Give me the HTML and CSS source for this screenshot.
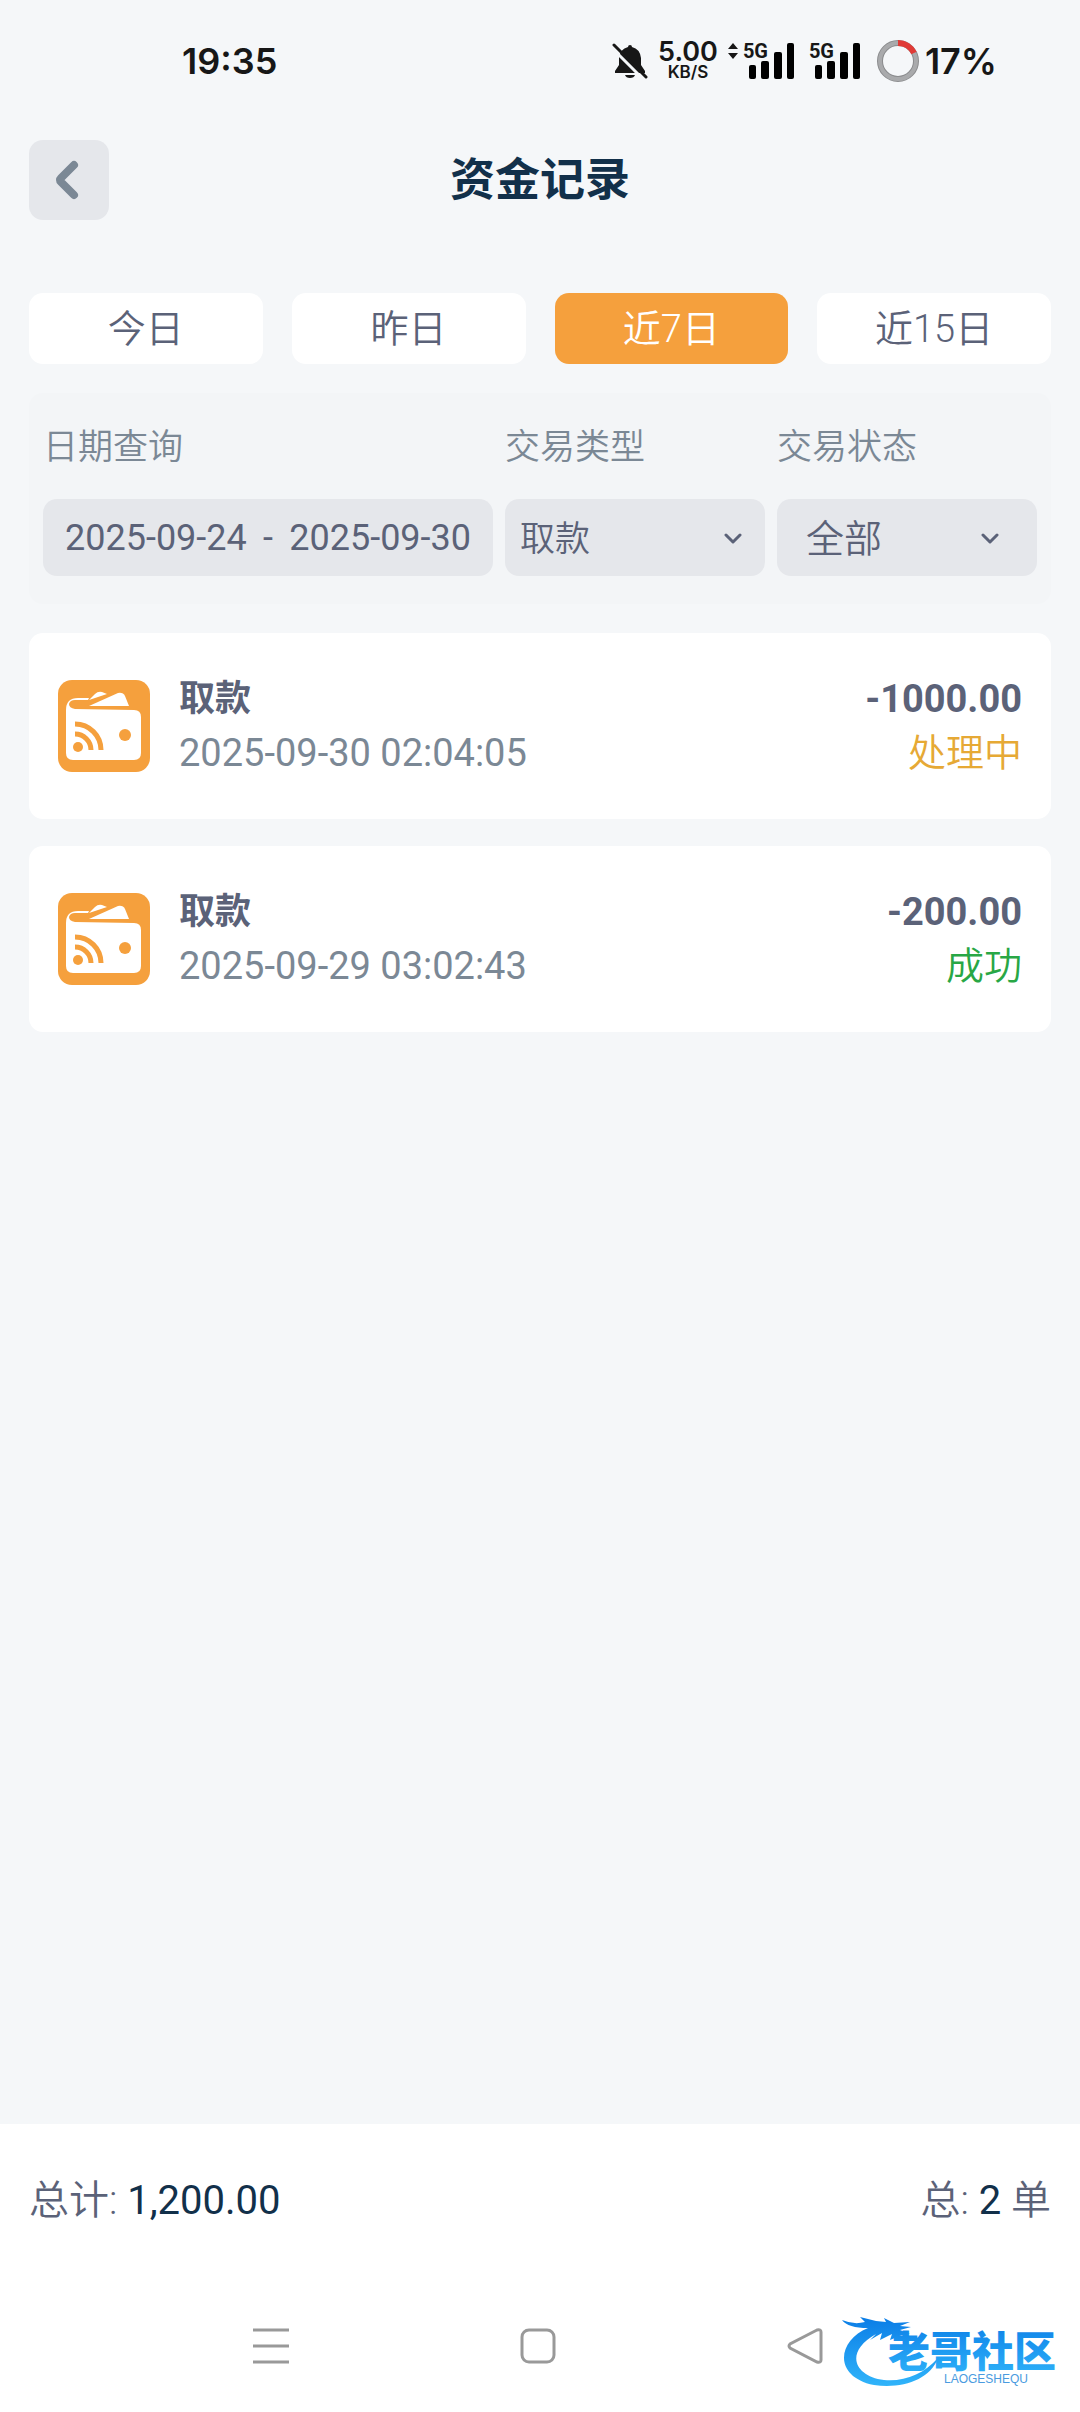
FILE: index.html
```html
<!DOCTYPE html>
<html lang="zh-CN">
<head>
<meta charset="utf-8">
<meta name="viewport" content="width=device-width, initial-scale=1">
<title>资金记录</title>
<link rel="stylesheet" href="styles.css">
</head>
<body>
<svg class="defs" aria-hidden="true">
  <symbol id="wallet" viewBox="0 0 92 92">
    <rect width="92" height="92" rx="14" fill="#f5a03d"/>
    <path d="M31 18 L20 18 Q8 18 8 30 L8 73 Q8 80 15 80 L76 80 Q83 80 83 73 L83 37 Q83 30 76 30 L17 29 Q11 28 11 24 Q12 20 17 20 L30 20 Z" fill="#fff"/>
    <path d="M31 20 L37 14 Q40 11 44 12 L49 14 Z" fill="#fff"/>
    <path d="M31 26 L60 13 Q65 12 67 16 L71 26 Z" fill="#fff"/>
    <circle cx="20" cy="67" r="5" fill="#f5a03d"/>
    <path d="M17 54 A16 16 0 0 1 33 70 M17 44 A26 26 0 0 1 43 70" fill="none" stroke="#f5a03d" stroke-width="5"/>
    <circle cx="67" cy="55" r="6" fill="#f5a03d"/>
  </symbol>
  <symbol id="chevron" viewBox="0 0 18 12">
    <path d="M2 2 L9 9 L16 2" fill="none" stroke="#5b6278" stroke-width="3" stroke-linecap="round" stroke-linejoin="round"/>
  </symbol>
  <symbol id="bars" viewBox="0 0 46 36">
    <rect x="0" y="22" width="7" height="14" rx="2"/>
    <rect x="12" y="18" width="8" height="18" rx="2"/>
    <rect x="25" y="9" width="8" height="27" rx="2"/>
    <rect x="38" y="0" width="7" height="36" rx="2"/>
  </symbol>
</svg>

<div class="status">
  <span class="clock">19:35</span>
  <div class="status-icons">
    <svg class="bell" viewBox="0 0 36 36">
      <path d="M18 2 Q20 2 20 4 Q28 6 29 15 L29 22 L33 28 L33 30 L3 30 L3 28 L7 22 L7 15 Q8 6 16 4 Q16 2 18 2 Z M13 32 H23 Q22 35 18 35 Q14 35 13 32 Z" fill="#171717"/>
      <path d="M0 5 L31 36" stroke="#f5f7f9" stroke-width="3"/>
      <path d="M2 2 L34 34" stroke="#171717" stroke-width="3" stroke-linecap="round"/>
    </svg>
    <div class="speed"><span class="speed-value">5.00</span><span class="speed-unit">KB/S</span></div>
    <div class="signal signal-active">
      <svg class="arrows" viewBox="0 0 10 16"><path d="M5 0 L10 6 H0 Z M5 16 L10 10 H0 Z" fill="#171717"/></svg>
      <span class="network">5G</span>
      <svg class="bars"><use href="#bars"/></svg>
    </div>
    <div class="signal">
      <span class="network">5G</span>
      <svg class="bars"><use href="#bars"/></svg>
    </div>
    <svg class="ring" viewBox="0 0 42 42" fill="none">
      <circle cx="21" cy="21" r="18" stroke="#8b8c8e" stroke-width="6"/>
      <circle cx="21" cy="21" r="18" stroke="#a9aaac" stroke-width="4"/>
      <path d="M21 3 A18 18 0 0 1 37 13" stroke="#e03a36" stroke-width="6"/>
    </svg>
    <span class="battery">17%</span>
  </div>
</div>

<header class="header">
  <button class="back" type="button" aria-label="返回">
    <svg viewBox="0 0 24 40"><path d="M19 5 L6 18 Q4 20 6 22 L19 35" fill="none" stroke="#7b8895" stroke-width="8" stroke-linecap="round" stroke-linejoin="round"/></svg>
  </button>
  <h1 class="title">资金记录</h1>
</header>

<main class="main">
  <div class="tabs">
    <button class="tab" type="button">今日</button>
    <button class="tab" type="button">昨日</button>
    <button class="tab tab-on" type="button">近7日</button>
    <button class="tab" type="button">近15日</button>
  </div>

  <form class="filters">
    <div class="field">
      <label class="label" for="from">日期查询</label>
      <div class="box range">
        <input class="date" id="from" type="text" value="2025-09-24">
        <span>-</span>
        <input class="date date-end" type="text" value="2025-09-30" aria-label="结束日期">
      </div>
    </div>
    <div class="field">
      <label class="label" for="type">交易类型</label>
      <div class="box pick">
        <select class="select" id="type"><option>取款</option></select>
        <svg class="chevron"><use href="#chevron"/></svg>
      </div>
    </div>
    <div class="field">
      <label class="label" for="state">交易状态</label>
      <div class="box pick pick-wide">
        <select class="select" id="state"><option>全部</option></select>
        <svg class="chevron"><use href="#chevron"/></svg>
      </div>
    </div>
  </form>

  <ul class="records">
    <li class="record">
      <svg class="wallet"><use href="#wallet"/></svg>
      <div class="info">
        <div class="kind">取款</div>
        <div class="time">2025-09-30 02:04:05</div>
      </div>
      <div class="result">
        <div class="amount">-1000.00</div>
        <div class="state pending">处理中</div>
      </div>
    </li>
    <li class="record">
      <svg class="wallet"><use href="#wallet"/></svg>
      <div class="info">
        <div class="kind">取款</div>
        <div class="time">2025-09-29 03:02:43</div>
      </div>
      <div class="result">
        <div class="amount">-200.00</div>
        <div class="state success">成功</div>
      </div>
    </li>
  </ul>
</main>

<footer class="footer">
  <div class="summary">
    <p class="sum">总计: <span class="figure">1,200.00</span></p>
    <p class="sum">总: <span class="figure">2</span> 单</p>
  </div>
  <nav class="nav">
    <button class="key" type="button" aria-label="最近任务"><svg viewBox="0 0 36 36"><path d="M0 2 H36 M0 18 H36 M0 34 H36"/></svg></button>
    <button class="key" type="button" aria-label="主页"><svg viewBox="0 0 36 36"><rect x="2" y="2" width="32" height="32" rx="7"/></svg></button>
    <button class="key" type="button" aria-label="后退"><svg viewBox="0 0 36 36"><path d="M30 2 L3 16 Q1 18 3 20 L30 34 Q34 35 34 32 V4 Q34 1 30 2 Z"/></svg></button>
  </nav>
  <svg class="watermark" viewBox="0 0 224 76">
    <defs>
      <linearGradient id="blue" x1="0" y1="0" x2="0" y2="1">
        <stop offset="0" stop-color="#0b7de6"/>
        <stop offset="1" stop-color="#30b4fa"/>
      </linearGradient>
    </defs>
    <path d="M28 14 C-2 26 -8 62 34 71 C62 75 90 66 98 44 C84 60 64 68 44 66 C14 62 4 38 36 20 L30 26 L42 19 L40 26 L52 20 L50 26 L62 21 L68 24 L66 20 L70 20 L60 16 L71 13 L60 12 L70 8 L54 9 L44 4 L46 8 L36 7 L20 3 L25 8 Q14 11 2 6 Q8 14 28 14 Z" fill="url(#blue)"/>
    <text class="mark-name" x="48" y="53" fill="url(#blue)">老哥社区</text>
    <text class="mark-sub" x="104" y="69">LAOGESHEQU</text>
  </svg>
</footer>
</body>
</html>
```
FILE: styles.css
```css
* {
  box-sizing: border-box;
}

body {
  margin: 0;
  min-height: 100vh;
  display: flex;
  flex-direction: column;
  background: #f5f7f9;
  color: #5b6278;
  font-family: Roboto, "Noto Sans CJK SC", sans-serif;
  font-size: 38px;
}

button,
input,
select {
  margin: 0;
  padding: 0;
  border: 0;
  background: none;
  color: inherit;
  font: inherit;
}

.defs {
  position: absolute;
  width: 0;
  height: 0;
}

/* Status bar */
.status {
  display: flex;
  align-items: center;
  justify-content: space-between;
  height: 122px;
  padding: 0 83px 0 182px;
  color: #171717;
  font-family: Inter, sans-serif;
  font-weight: 600;
}

.clock,
.battery {
  font-size: 36px;
}

.status-icons {
  display: flex;
  align-items: center;
}

.bell {
  width: 36px;
  height: 36px;
  margin-right: 10px;
}

.speed {
  display: flex;
  flex-direction: column;
  align-items: center;
  margin-right: 10px;
}

.speed-value {
  font-size: 27px;
  line-height: 22px;
}

.speed-unit {
  font-size: 17px;
  line-height: 18px;
}

.signal {
  display: grid;
  grid-template-columns: 6px 46px;
  margin-right: 14px;
}

.signal-active {
  grid-template-columns: 15px 6px 46px;
}

.arrows {
  width: 10px;
  height: 16px;
}

.network {
  width: 26px;
  font: 700 20px/16px Roboto, sans-serif;
}

.bars {
  width: 46px;
  height: 36px;
}

.ring {
  width: 42px;
  height: 42px;
  margin-left: 2px;
  margin-right: 6px;
}

/* Header */
.header {
  display: grid;
  grid-template-columns: 80px 1fr 80px;
  align-items: center;
  padding: 18px 29px 0;
}

.back {
  display: flex;
  align-items: center;
  justify-content: center;
  height: 80px;
  padding-right: 4px;
  border-radius: 14px;
  background: #e5e7eb;
}

.back svg {
  width: 24px;
  height: 40px;
}

.title {
  margin: 0;
  padding-top: 2px;
  color: #12304a;
  font-size: 45px;
  font-weight: 700;
  line-height: 78px;
  text-align: center;
}

/* Content */
.main {
  flex: 1;
  padding: 73px 29px 29px;
}

.tabs {
  display: grid;
  grid-template-columns: repeat(4, 1fr);
  gap: 29px;
}

.tab {
  height: 71px;
  padding-bottom: 6px;
  border-radius: 14px;
  background: #fff;
  font-weight: 350;
}

.tab-on {
  background: #f5a03d;
  color: #fff;
}

.filters {
  display: grid;
  grid-template-columns: 45fr 26fr 26fr;
  gap: 12px;
  margin-top: 29px;
  padding: 30px 14px 28px;
  border-radius: 14px;
  background: #f3f5f7;
  font-size: 35px;
}

.field {
  min-width: 0;
}

.label {
  display: block;
  margin-bottom: 26px;
  color: #7b8895;
  font-weight: 350;
  line-height: 50px;
}

.box {
  display: flex;
  align-items: center;
  height: 77px;
  border-radius: 14px;
  background: #e5e7eb;
}

.range {
  padding: 0 22px;
  font-size: 36px;
}

.date {
  flex: 1;
  width: 0;
}

.date-end {
  text-align: right;
}

.pick {
  padding: 3px 23px 0 15px;
  font-weight: 350;
}

.pick-wide {
  padding: 3px 38px 0 29px;
  font-size: 38px;
}

.select {
  flex: 1;
  width: 0;
  appearance: none;
}

.chevron {
  width: 18px;
  height: 12px;
}

/* Records */
.records {
  display: grid;
  gap: 27px;
  margin: 29px 0 0;
  padding: 0;
  list-style: none;
}

.record {
  display: flex;
  align-items: center;
  gap: 29px;
  padding: 39px 29px;
  border-radius: 14px;
  background: #fff;
  line-height: 54px;
}

.wallet {
  width: 92px;
  height: 92px;
}

.info {
  flex: 1;
}

.kind {
  font-size: 36px;
  font-weight: 700;
}

.time {
  color: #7b8895;
}

.result {
  text-align: right;
}

.amount {
  font-weight: 700;
}

.state {
  font-weight: 350;
}

.pending {
  color: #e6a935;
}

.success {
  color: #28a745;
}

/* Totals and system keys */
.footer {
  position: relative;
  background: #fff;
}

.summary {
  display: flex;
  align-items: center;
  justify-content: space-between;
  height: 152px;
  padding: 0 29px 6px;
  font-size: 40px;
  font-weight: 350;
}

.sum {
  margin: 0;
}

.figure {
  color: #12304a;
  font-weight: 400;
}

.nav {
  display: grid;
  grid-template-columns: repeat(3, 1fr);
  justify-items: center;
  padding: 52px 142px 48px 137px;
}

.key {
  display: block;
  width: 36px;
  height: 36px;
}

.key svg {
  display: block;
  fill: none;
  stroke: #999;
  stroke-width: 3;
}

.watermark {
  position: absolute;
  right: 16px;
  bottom: 22px;
  width: 224px;
  height: 76px;
}

.mark-name {
  font: 900 42px "Noto Sans CJK SC", sans-serif;
}

.mark-sub {
  fill: #4a9be0;
  font: 12px "Liberation Sans", sans-serif;
}
```
